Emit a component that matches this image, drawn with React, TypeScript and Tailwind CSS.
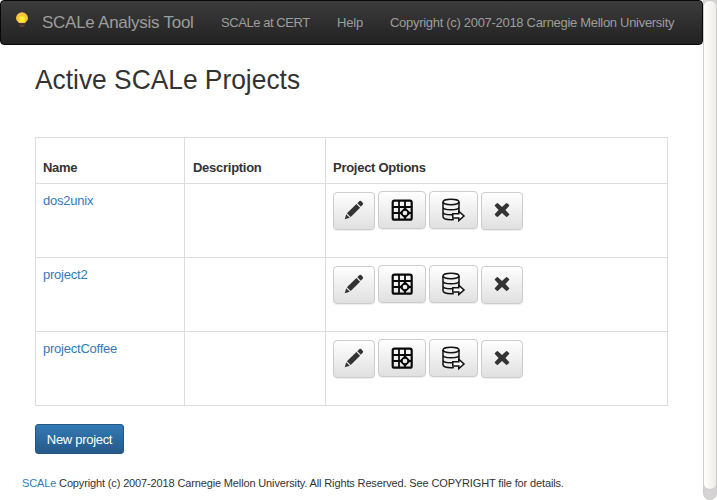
import type { ReactNode } from "react";

function Bulb() {
  return (
    <svg width="14" height="16" viewBox="0 0 14 16">
      <path d="M7 .3a6 6 0 0 0-6 5.900c0 2.600 2 3.200 2.900 4.800h6.200C11 9.400 13 8.800 13 6.200A6 6 0 0 0 7 .3z" fill="#f9c440" />
      <circle cx="7" cy="7.300" r="3" fill="#ffef2e" />
      <path d="M4 11.100h6v1.400H4z" fill="#4a4038" />
      <path d="M4 12.900h6L8.500 14.500 7 15.200l-1.500-.7z" fill="#6e4026" />
    </svg>
  );
}

function Pencil() {
  return (
    <svg className="mb-[2px]" width="20" height="20" viewBox="0 0 20 20" fill="#333">
      <path d="M.8 19.200l1.400-5 3.600 3.600zM2.900 13.200L12.400 4l3.700 3.700-9.400 9.300zM13.300 3.200l2.200-2.100q.9-.6 1.600 0l1.800 1.800q.6.800 0 1.600l-2.100 2.200z" />
    </svg>
  );
}

function GridIcon() {
  return (
    <svg width="22" height="22" viewBox="0 0 22 22" fill="none" stroke="#0a0a0a">
      <rect x="1.700" y="1.700" width="19" height="19" rx="1.800" strokeWidth="2.200" />
      <path d="M8 2v18M14 2v18M2 8h18M2 14h18" strokeWidth="1.800" />
      <path d="M14 9.500l4.500 4.500-4.500 4.500L9.500 14z" fill="#0a0a0a" strokeWidth="1.800" />
      <circle cx="14" cy="14" r="2.300" fill="#eee" stroke="none" />
    </svg>
  );
}

function DatabaseIcon() {
  return (
    <svg width="24" height="24" viewBox="0 0 24 24" fill="none" stroke="#111" strokeWidth="1.500">
      <ellipse cx="9" cy="4" rx="8" ry="2.700" />
      <path d="M1 4v14.800c0 1.600 3.600 2.900 8 2.900 1 0 2-.1 2.900-.2M17 4v10.500M1 9c0 1.600 3.600 2.800 8 2.800s8-1.200 8-2.800M1 14c0 1.600 3.600 2.800 8 2.800 1 0 2 0 2.900-.2" />
      <path d="M10.800 15.800h6v-2.500l5.200 4.700-5.200 4.600v-2.500h-6z" fill="#fff" strokeWidth="1.500" />
    </svg>
  );
}

function Remove() {
  return (
    <svg className="mb-[2px]" width="16" height="16" viewBox="0 0 16 16" fill="#333">
      <path d="M3.900 1.200L8 5l4.100-3.800q.5-.4 1 0l2 1.900q.4.500 0 1L11.400 8l3.700 3.900q.4.500 0 1l-2 1.900q-.5.400-1 0L8 11l-4.100 3.800q-.5.400-1 0L.9 12.900q-.4-.5 0-1L4.600 8 .9 4.100q-.4-.5 0-1l2-1.900q.5-.4 1 0z" />
    </svg>
  );
}

function OptionButton({ size, label, children }: { size: string; label: string; children: ReactNode }) {
  return (
    <button
      aria-label={label}
      className={`flex h-[38px] items-center justify-center rounded-[4px] border border-[#ccc] bg-linear-to-b from-white to-[#e0e0e0] shadow-[0_1px_1px_rgba(0,0,0,0.075)] ${size}`}
    >
      {children}
    </button>
  );
}

const projects = ["dos2unix", "project2", "projectCoffee"];

export default function App() {
  return (
    <div className="flex h-[500px] w-[717px] overflow-hidden bg-white font-['Liberation_Sans',Arial,sans-serif] text-[13px] text-[#333]">
      <div className="w-[703px]">
        <nav className="flex h-[45px] items-center whitespace-nowrap rounded-[4px] border border-[#080808] bg-linear-to-b from-[#3c3c3c] to-[#222] pl-[14px] text-[#9d9d9d]">
          <div className="mb-[6px] w-[27px]"><Bulb /></div>
          <span className="w-[179px] text-[17px] leading-5 tracking-[-0.26px]">SCALe Analysis Tool</span>
          <span className="w-[116px] tracking-[-0.44px]">SCALe at CERT</span>
          <span className="w-[53px] tracking-[-0.2px]">Help</span>
          <span className="tracking-[-0.3px]">Copyright (c) 2007-2018 Carnegie Mellon University</span>
        </nav>
        <main className="pl-[35px]">
          <h1 className="origin-left scale-x-[0.941] pt-[18px] text-[28px] leading-[34px]">Active SCALe Projects</h1>
          <table className="mt-[40px] w-[633px] table-fixed border-separate border-spacing-0 border-l border-t border-[#ddd]">
            <colgroup>
              <col className="w-[149px]" />
              <col className="w-[141px]" />
              <col className="w-[342px]" />
            </colgroup>
            <thead>
              <tr className="h-[46px] text-left align-bottom leading-[18px] tracking-[-0.27px]">
                <th className="border-b border-r border-[#ddd] pb-[6px] pl-[7px]">Name</th>
                <th className="border-b border-r border-[#ddd] pb-[6px] pl-[8px]">Description</th>
                <th className="border-b border-r border-[#ddd] pb-[6px] pl-[7px]">Project Options</th>
              </tr>
            </thead>
            <tbody>
              {projects.map((name) => (
                <tr key={name} className="h-[74px] align-top">
                  <td className="border-b border-r border-[#ddd] pl-[7px] pt-[8px] leading-[18px] tracking-[-0.23px] text-[#337ab7]">{name}</td>
                  <td className="border-b border-r border-[#ddd]" />
                  <td className="border-b border-r border-[#ddd] pl-[7px] pt-[7px]">
                    <div className="flex gap-[3px]">
                      <OptionButton label="Edit" size="w-[42px] mt-px"><Pencil /></OptionButton>
                      <OptionButton label="Table" size="w-[48px]"><GridIcon /></OptionButton>
                      <OptionButton label="Export" size="w-[49px]"><DatabaseIcon /></OptionButton>
                      <OptionButton label="Delete" size="w-[42px] mt-px"><Remove /></OptionButton>
                    </div>
                  </td>
                </tr>
              ))}
            </tbody>
          </table>
          <button className="mt-[18px] block h-[30px] w-[89px] rounded-[3px] border border-[#245580] bg-linear-to-b from-[#337ab7] to-[#265a88] pt-[2px] tracking-[-0.3px] text-white">
            New project
          </button>
        </main>
        <footer className="mt-[21px] whitespace-nowrap pl-[22px] text-[11px] leading-4 tracking-[-0.14px]">
          <span className="text-[#337ab7]">SCALe</span> Copyright (c) 2007-2018 Carnegie Mellon University. All Rights Reserved. See COPYRIGHT file for details.
        </footer>
      </div>
      <div className="h-[500px] w-[14px] rounded-b-[7px] border-x border-b border-[#cfcdca] bg-[#d5d5d5]">
        <div className="h-[490px] rounded-[6px] border-b border-t border-[#d0cecb] bg-linear-to-r from-white to-[#eeedeb]" />
      </div>
    </div>
  );
}
